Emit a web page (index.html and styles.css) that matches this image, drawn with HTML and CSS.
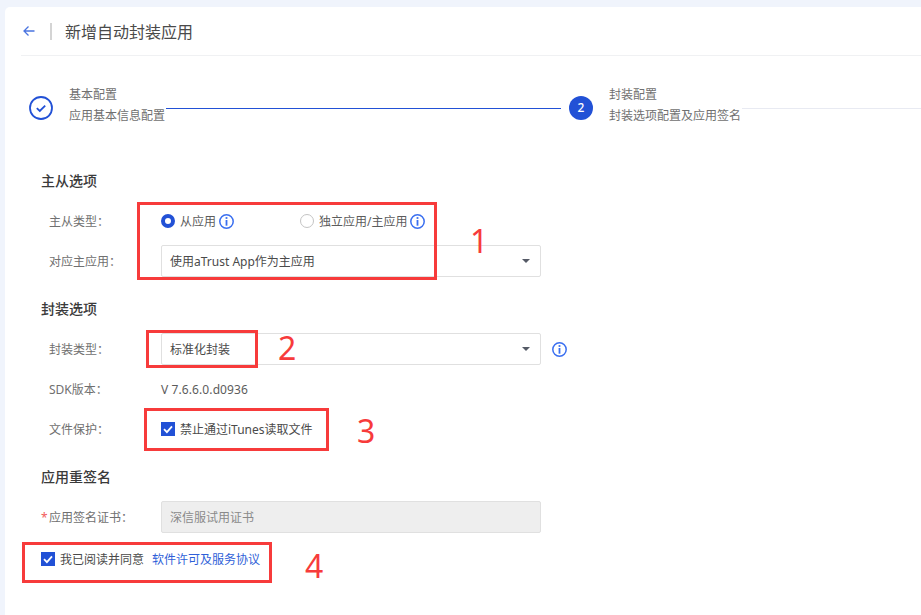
FILE: index.html
```html
<!DOCTYPE html>
<html>

<head>
    <meta charset="utf-8">
    <title>新增自动封装应用</title>
    <link rel="stylesheet" href="styles.css">
</head>

<body>
    <div class="card">
        <div class="header">
            <svg class="back" width="12" height="12" viewBox="0 0 12 12">
                <path d="M11.5 6H1M5.5 1.5L1 6l4.5 4.5" fill="none" stroke="#4a74e0" stroke-width="1.3" />
            </svg>
            <span class="divider"></span>
            <span class="page_title">新增自动封装应用</span>
        </div>

        <div class="steps">
            <svg class="step_icon" width="24" height="24" viewBox="0 0 24 24">
                <circle cx="12" cy="12" r="11" fill="none" stroke="#2251d6" stroke-width="1.8" />
                <path d="M7.8 12.2l3 2.8 5.4-5.4" fill="none" stroke="#2251d6" stroke-width="1.8" />
            </svg>
            <div class="step_text">
                <div>基本配置</div>
                <div>应用基本信息配置</div>
            </div>
            <div class="step_line done"></div>
            <div class="step_num">2</div>
            <div class="step_text">
                <div>封装配置</div>
                <div>封装选项配置及应用签名</div>
            </div>
            <div class="step_line"></div>
        </div>

        <div class="form">
            <div class="section">
                <div class="section_title">主从选项</div>
                <div class="row">
                    <div class="label">主从类型：</div>
                    <div class="radio_item first">
                        <span class="radio checked"></span>
                        <span>从应用</span>
                        <svg class="info" width="15" height="15" viewBox="0 0 15 15">
                            <circle cx="7.5" cy="7.5" r="6.7" fill="none" stroke="#3a6ff0" stroke-width="1.5" />
                            <rect x="6.6" y="3.1" width="1.8" height="1.8" fill="#3a6ff0" />
                            <rect x="6.6" y="6" width="1.8" height="5.7" fill="#3a6ff0" />
                        </svg>
                    </div>
                    <div class="radio_item">
                        <span class="radio"></span>
                        <span>独立应用/主应用</span>
                        <svg class="info" width="15" height="15" viewBox="0 0 15 15">
                            <circle cx="7.5" cy="7.5" r="6.7" fill="none" stroke="#3a6ff0" stroke-width="1.5" />
                            <rect x="6.6" y="3.1" width="1.8" height="1.8" fill="#3a6ff0" />
                            <rect x="6.6" y="6" width="1.8" height="5.7" fill="#3a6ff0" />
                        </svg>
                    </div>
                </div>
                <div class="row">
                    <div class="label">对应主应用：</div>
                    <div class="select">
                        <span>使用aTrust App作为主应用</span>
                        <span class="caret"></span>
                    </div>
                </div>
            </div>

            <div class="section">
                <div class="section_title">封装选项</div>
                <div class="row">
                    <div class="label">封装类型：</div>
                    <div class="select">
                        <span>标准化封装</span>
                        <span class="caret"></span>
                    </div>
                    <svg class="info select_info" width="15" height="15" viewBox="0 0 15 15">
                        <circle cx="7.5" cy="7.5" r="6.7" fill="none" stroke="#3a6ff0" stroke-width="1.5" />
                        <rect x="6.6" y="3.1" width="1.8" height="1.8" fill="#3a6ff0" />
                        <rect x="6.6" y="6" width="1.8" height="5.7" fill="#3a6ff0" />
                    </svg>
                </div>
                <div class="row">
                    <div class="label">SDK版本：</div>
                    <div class="value">V 7.6.6.0.d0936</div>
                </div>
                <div class="row">
                    <div class="label">文件保护：</div>
                    <div class="check_item">
                        <svg class="checkbox" width="14" height="14" viewBox="0 0 14 14">
                            <rect width="14" height="14" fill="#2251d6" />
                            <path d="M3 7.2l2.9 2.9L11 4.4" fill="none" stroke="#fff" stroke-width="1.8" />
                        </svg>
                        <span>禁止通过iTunes读取文件</span>
                    </div>
                </div>
            </div>

            <div class="section">
                <div class="section_title">应用重签名</div>
                <div class="row">
                    <div class="label"><span class="star">*</span>应用签名证书：</div>
                    <div class="select disabled">深信服试用证书</div>
                </div>
            </div>

            <div class="agree">
                <svg class="checkbox" width="14" height="14" viewBox="0 0 14 14">
                    <rect width="14" height="14" fill="#2251d6" />
                    <path d="M3 7.2l2.9 2.9L11 4.4" fill="none" stroke="#fff" stroke-width="1.8" />
                </svg>
                <span>我已阅读并同意</span>
                <a class="link">软件许可及服务协议</a>
            </div>
        </div>
    </div>

    <!-- red marks drawn over the screenshot -->
    <div class="mark mark1"></div>
    <div class="mark mark2"></div>
    <div class="mark mark3"></div>
    <div class="mark mark4"></div>
    <div class="mark_num num1">1</div>
    <div class="mark_num num2">2</div>
    <div class="mark_num num3">3</div>
    <div class="mark_num num4">4</div>
</body>

</html>
```

FILE: styles.css
```css
* {
    box-sizing: border-box;
}

html,
body {
    height: 100%;
}

body {
    margin: 0;
    padding: 7px 0 0 5px;
    position: relative;
    overflow: hidden;
    background: #f0f4fc;
    font-family: "Noto Sans", "Noto Sans CJK SC", sans-serif;
    font-size: 12px;
    color: #4a4a4a;
}

.card {
    height: 100%;
    padding-left: 16px;
    background: #fff;
    border-radius: 5px 0 0 0;
}

/* header */
.header {
    display: flex;
    align-items: center;
    height: 49px;
    border-bottom: 1px solid #f0f1f3;
}

.back {
    margin-left: 2px;
}

.divider {
    width: 2px;
    height: 17px;
    margin: 0 13px 0 15px;
    background: #d4d4d4;
}

.page_title {
    font-size: 16px;
    color: #4a4a4a;
}

/* steps */
.steps {
    display: flex;
    align-items: flex-start;
    margin: 28px 0 35px -16px;
    padding-left: 24px;
}

.step_icon,
.step_num {
    flex: none;
    margin: 12px 16px 0 0;
}

.step_num {
    width: 24px;
    height: 24px;
    border-radius: 50%;
    background: #2251d6;
    color: #fff;
    text-align: center;
    line-height: 24px;
    font-weight: 500;
}

.step_text {
    flex: none;
    line-height: 21px;
    color: #707070;
}

.step_line {
    flex: 1;
    height: 1px;
    margin: 24px 0 0 1px;
    background: #e8eaf2;
}

.step_line.done {
    flex: none;
    width: 395px;
    margin-right: 8px;
    background: #2251d6;
}

/* form */
.form {
    padding-left: 20px;
}

.section {
    margin-bottom: 8px;
}

.section_title {
    height: 40px;
    line-height: 40px;
    font-size: 14px;
    font-weight: 500;
    color: #3a3a3a;
}

.row {
    display: flex;
    align-items: center;
    height: 40px;
}

.label {
    flex: none;
    width: 120px;
    padding-left: 8px;
    color: #707070;
}

.star {
    display: inline-block;
    width: 8px;
    margin-left: -8px;
    color: #f25b5b;
}

.radio_item {
    display: flex;
    align-items: center;
    color: #5c5c5c;
}

.radio_item.first {
    width: 139px;
}

.radio {
    width: 14px;
    height: 14px;
    margin-right: 5px;
    border: 1px solid #c4c4c4;
    border-radius: 50%;
}

.radio.checked {
    border: 4px solid #2251d6;
}

.info {
    flex: none;
    margin-left: 3px;
}

.select {
    display: flex;
    align-items: center;
    justify-content: space-between;
    width: 380px;
    height: 32px;
    padding: 0 10px 0 8px;
    border: 1px solid #e0e0e0;
    border-radius: 2px;
    color: #4a4a4a;
}

.select.disabled {
    background: #eeeeee;
    color: #8a8a8a;
}

.caret {
    border-style: solid;
    border-width: 4px 4px 0 4px;
    border-color: #555a66 transparent transparent transparent;
}

.select_info {
    margin-left: 11px;
}

.value {
    color: #5c5c5c;
    letter-spacing: 0.1px;
}

.check_item,
.agree {
    display: flex;
    align-items: center;
    color: #4a4a4a;
}

.checkbox {
    flex: none;
    margin-right: 5px;
}

.agree {
    height: 40px;
    margin-top: -6px;
}

.link {
    margin-left: 8px;
    color: #2f5fd8;
}

/* red marks */
.mark {
    position: absolute;
    border: 3px solid #f73b3b;
}

.mark1 {
    left: 137px;
    top: 202px;
    width: 300px;
    height: 78px;
}

.mark2 {
    left: 146px;
    top: 330px;
    width: 112px;
    height: 38px;
}

.mark3 {
    left: 144px;
    top: 408px;
    width: 185px;
    height: 43px;
}

.mark4 {
    left: 22px;
    top: 542px;
    width: 250px;
    height: 41px;
}

.mark_num {
    position: absolute;
    font-family: "Noto Sans", sans-serif;
    font-size: 32px;
    line-height: 40px;
    color: #f73b3b;
}

.num1 {
    left: 470px;
    top: 221px;
}

.num2 {
    left: 278px;
    top: 328px;
}

.num3 {
    left: 357px;
    top: 411px;
}

.num4 {
    left: 305px;
    top: 546px;
}
```
